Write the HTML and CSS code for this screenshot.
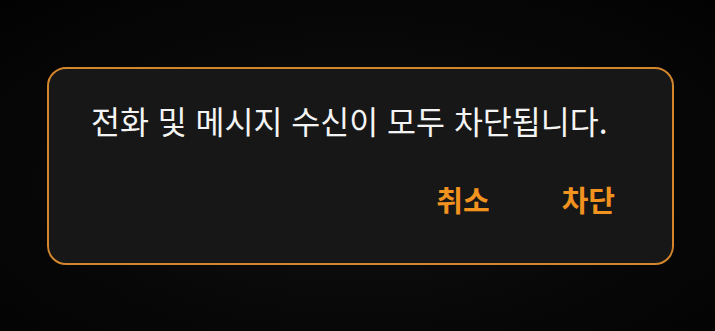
FILE: index.html
```html
<!DOCTYPE html>
<html lang="ko">
<head>
<meta charset="utf-8">
<link rel="stylesheet" href="styles.css">
</head>
<body>
<div class="dialog">
  <p class="message">전화 및 메시지 수신이 모두 차단됩니다.</p>
  <div class="actions">
    <span class="btn">취소</span>
    <span class="btn">차단</span>
  </div>
</div>
</body>
</html>
```
FILE: styles.css
```css
html, body {
  margin: 0;
  height: 100%;
}
body {
  background: radial-gradient(ellipse at 50% 55%, #101010 0%, #080808 55%, #020202 100%);
  font-family: "Noto Sans CJK KR", "Noto Sans", sans-serif;
  padding: 67px 0 0 47px;
  box-sizing: border-box;
  overflow: hidden;
}
.dialog {
  width: 627px;
  height: 198px;
  box-sizing: border-box;
  border: 2px solid #d4862c;
  border-radius: 19px;
  background: #171717;
  display: flex;
  flex-direction: column;
  padding: 30px 57px 0 42px;
}
.message {
  margin: 0;
  color: #f4f4f4;
  font-size: 31.5px;
  line-height: 42px;
  white-space: nowrap;
}
.actions {
  display: flex;
  justify-content: flex-end;
  gap: 72px;
  margin-top: 38px;
}
.btn {
  color: #f2921f;
  font-size: 29px;
  font-weight: 700;
  line-height: 40px;
}
```
